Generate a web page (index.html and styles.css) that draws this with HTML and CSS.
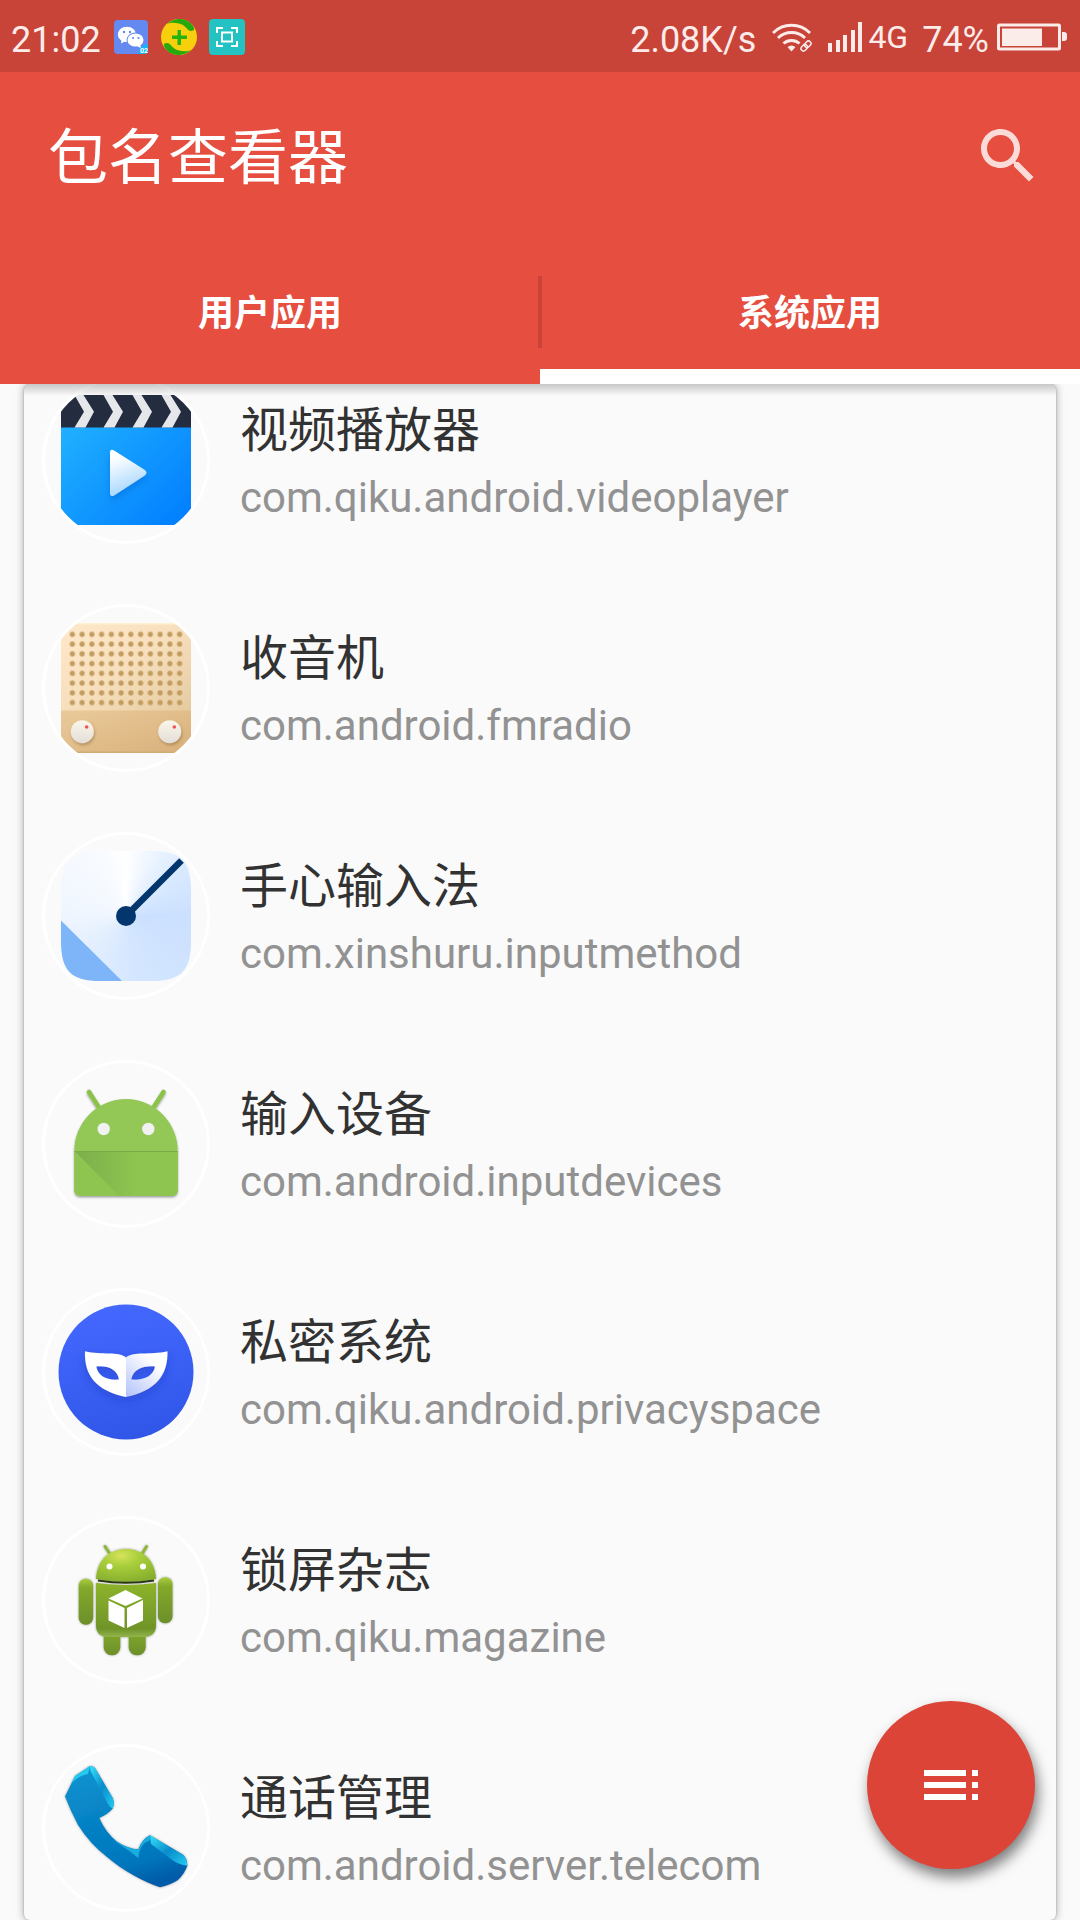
FILE: index.html
```html
<!DOCTYPE html>
<html lang="zh-CN">
<head>
<meta charset="utf-8">
<meta name="viewport" content="width=device-width, initial-scale=1">
<title>包名查看器</title>
<link rel="stylesheet" href="styles.css">
</head>
<body>
<div class="status-bar">
  <div class="status-group">
    <span class="status-text">21:02</span>
    <svg class="status-icon" viewBox="0 0 36 36" aria-hidden="true">
      <rect x="1" y="1" width="34" height="34" rx="4" fill="#6489f1"/>
      <path d="M14 8C8.500 8 5 11.500 5 15.500c0 2.500 1.300 4.600 3.400 6L8 24.500l3.300-1.800c1 .3 2 .4 3 .4" fill="#fff"/>
      <ellipse cx="14" cy="15.300" rx="9" ry="7.500" fill="#fff"/>
      <ellipse cx="22.500" cy="21" rx="9" ry="7.600" fill="#6489f1"/>
      <ellipse cx="22.500" cy="21" rx="8" ry="6.600" fill="#fff"/>
      <path d="M24 27l4 2.300-.6-3.300z" fill="#fff"/>
      <g fill="#6489f1"><circle cx="11" cy="13" r="1.200"/><circle cx="17" cy="13" r="1.200"/><circle cx="20" cy="19" r="1.100"/><circle cx="25.500" cy="19" r="1.100"/></g>
      <path d="M25 35a11 11 0 0 1 10-10v6a4 4 0 0 1-4 4z" fill="#13b5f5"/>
      <text x="27" y="34" class="badge-text">02</text>
    </svg>
    <svg class="status-icon" viewBox="0 0 36 36" aria-hidden="true">
      <circle cx="18" cy="18" r="18" fill="#f8cf0c"/>
      <path d="M6 5C13-2 26-2 32 7q3 5-2 5c-4 0-5-6-12-7.500C13 3.300 9 3.500 6 5z" fill="#27a80d"/>
      <path d="M30 31C23 38 10 38 4 29q-3-5 2-5c4 0 5 6 12 7.500 5 1.200 9 1 12-.5z" fill="#27a80d"/>
      <path d="M16.500 11h3.500v5.500h6V20h-6v6h-3.500v-6H11v-3.500h5.500z" fill="#27b30d"/>
    </svg>
    <svg class="status-icon" viewBox="0 0 36 36" aria-hidden="true">
      <rect width="36" height="36" rx="4" fill="#22c3c2"/>
      <path d="M8 14V9h6M22 9h6v5M28 22v5h-6M14 27H8v-5" fill="none" stroke="#fff" stroke-width="2"/>
      <rect x="13" y="13.500" width="10" height="9" fill="none" stroke="#fff" stroke-width="2"/>
    </svg>
  </div>
  <div class="status-group status-right">
    <span class="status-text">2.08K/s</span>
    <svg class="wifi" viewBox="0 0 40 32" aria-hidden="true">
      <g fill="none" stroke="#fbecea" stroke-width="3">
        <path d="M1 12a26 26 0 0 1 37 0"/>
        <path d="M6 17a19.500 19.500 0 0 1 27 0"/>
        <path d="M11.500 22.500a12 12 0 0 1 16 0"/>
      </g>
      <path d="M15.500 26q4-3 8 0l-4 4.500z" fill="#fbecea"/>
      <g fill="none" stroke="#fbecea" stroke-width="1.500" transform="rotate(-45 34 25)">
        <rect x="28" y="22.500" width="7" height="5" rx="2.500"/><rect x="33" y="22.500" width="7" height="5" rx="2.500"/>
      </g>
    </svg>
    <svg class="signal" viewBox="0 0 34 32" aria-hidden="true">
      <path d="M0 22h4v9H0zM8 19h4v12H8zM15 14h4v17h-4zM23 9h4v22h-4zM30 1h4v30h-4z" fill="#fbecea"/>
    </svg>
    <span class="network">4G</span>
    <span class="status-text">74%</span>
    <svg class="battery" viewBox="0 0 70 28" aria-hidden="true">
      <rect x="1.500" y="2" width="61" height="24" rx="1" fill="none" stroke="#fbecea" stroke-width="3"/>
      <rect x="5" y="5.500" width="40" height="17.500" fill="#fbecea"/>
      <path d="M65 9h2q3 0 3 3v3q0 3-3 3h-2z" fill="#fbecea"/>
    </svg>
  </div>
</div>

<header class="app-header">
  <div class="toolbar">
    <h1 class="title">包名查看器</h1>
    <button class="icon-button" type="button" aria-label="搜索">
      <svg viewBox="0 0 24 24" aria-hidden="true"><path d="M15.500 14h-.79l-.28-.27C15.410 12.590 16 11.110 16 9.500 16 5.910 13.090 3 9.500 3S3 5.910 3 9.500 5.910 16 9.500 16c1.610 0 3.090-.59 4.230-1.570l.27.28v.79l5 4.990L20.490 19l-4.990-5zm-6 0C7.010 14 5 11.990 5 9.500S7.010 5 9.500 5 14 7.010 14 9.500 11.990 14 9.500 14z"/></svg>
    </button>
  </div>
  <nav class="tabs">
    <button class="tab" type="button">用户应用</button>
    <span class="tab-divider"></span>
    <button class="tab tab-active" type="button">系统应用</button>
  </nav>
</header>

<main class="content">
  <div class="card">
    <ul class="app-list">
      <li class="app-row">
        <svg class="avatar" viewBox="0 0 168 168" aria-hidden="true">
          <defs>
            <clipPath id="round"><circle cx="84" cy="84" r="82"/></clipPath>
            <linearGradient id="videoBlue" x1="0" y1="0" x2="1" y2="1"><stop offset="0" stop-color="#25b8ff"/><stop offset="1" stop-color="#007cff"/></linearGradient>
            <linearGradient id="playWhite" x1="0" y1="0" x2=".3" y2="1"><stop offset=".2" stop-color="#fff"/><stop offset="1" stop-color="#a5d6ff"/></linearGradient>
            <filter id="soft" x="-30%" y="-30%" width="160%" height="160%"><feDropShadow dx="0" dy="4" stdDeviation="3" flood-color="#0458c0" flood-opacity=".4"/></filter>
          </defs>
          <g clip-path="url(#round)">
            <rect x="19" y="19" width="130" height="130" fill="url(#videoBlue)"/>
            <rect x="19" y="19" width="130" height="32.500" fill="#232d3f"/>
            <g fill="#e6e7ea">
              <path id="chevron" d="M32.500 19h9l10.500 16.700-8.500 15.800h-11L42 35.700z"/>
              <use href="#chevron" x="29"/><use href="#chevron" x="58"/><use href="#chevron" x="87"/>
            </g>
          </g>
          <path d="M68 77q0-5 4.500-2.300l30 19q4 3 0 6l-30 19.500q-4.500 2.500-4.500-2.200z" fill="url(#playWhite)" filter="url(#soft)"/>
          <circle class="ring" cx="84" cy="84" r="82.500"/>
        </svg>
        <div class="app-text"><h2 class="app-name">视频播放器</h2><p class="app-package">com.qiku.android.videoplayer</p></div>
      </li>
      <li class="app-row">
        <svg class="avatar" viewBox="0 0 168 168" aria-hidden="true">
          <defs>
            <linearGradient id="wood" x1="0" y1="0" x2="1" y2="1"><stop offset="0" stop-color="#ffe8ca"/><stop offset=".5" stop-color="#f7dfbd"/><stop offset="1" stop-color="#e6cba0"/></linearGradient>
            <linearGradient id="woodDark" x1="0" y1="0" x2="1" y2="1"><stop offset="0" stop-color="#eaca9a"/><stop offset="1" stop-color="#d8b07b"/></linearGradient>
            <linearGradient id="knob" x1="0" y1="0" x2="0" y2="1"><stop offset="0" stop-color="#fbf6ea"/><stop offset="1" stop-color="#e3dfd8"/></linearGradient>
            <pattern id="dots" x="25.500" y="25.500" width="9.750" height="9.750" patternUnits="userSpaceOnUse"><circle cx="4.870" cy="4.870" r="2.600" fill="#c29d5f"/></pattern>
            <filter id="knobShadow" x="-30%" y="-30%" width="160%" height="170%"><feDropShadow dx="1" dy="2" stdDeviation="1.500" flood-color="#8a6530" flood-opacity=".5"/></filter>
          </defs>
          <g clip-path="url(#round)">
            <rect x="19" y="19" width="130" height="88" fill="url(#wood)"/>
            <rect x="19" y="19" width="130" height="1.500" fill="#fff2cf"/>
            <rect x="25.500" y="25.500" width="117" height="78" fill="url(#dots)"/>
            <rect x="19" y="106.500" width="130" height="42.500" fill="url(#woodDark)"/>
            <rect x="19" y="147.500" width="130" height="1.500" fill="#cfac72"/>
          </g>
          <g filter="url(#knobShadow)"><circle cx="40.300" cy="127.700" r="11.500" fill="url(#knob)"/><circle cx="127.700" cy="127.700" r="11.500" fill="url(#knob)"/></g>
          <circle cx="44.700" cy="123" r="1.800" fill="#ef5350"/><circle cx="132.300" cy="123" r="1.800" fill="#ef5350"/>
          <circle class="ring" cx="84" cy="84" r="82.500"/>
        </svg>
        <div class="app-text"><h2 class="app-name">收音机</h2><p class="app-package">com.android.fmradio</p></div>
      </li>
      <li class="app-row">
        <svg class="avatar" viewBox="0 0 168 168" aria-hidden="true">
          <defs><clipPath id="squircle"><path d="M19 59C19 29 29 19 59 19h50c30 0 40 10 40 40v50c0 30-10 40-40 40H59c-30 0-40-10-40-40z"/></clipPath></defs>
          <g clip-path="url(#squircle)">
            <foreignObject x="19" y="19" width="130" height="130"><div class="dial"></div></foreignObject>
            <path d="M19 88.500L80 149H19z" fill="#7db5f8"/>
          </g>
          <path d="M84 84L139.500 28.500" stroke="#03366c" stroke-width="6.500"/>
          <circle cx="84" cy="84" r="10" fill="#03366c"/>
          <circle class="ring" cx="84" cy="84" r="82.500"/>
        </svg>
        <div class="app-text"><h2 class="app-name">手心输入法</h2><p class="app-package">com.xinshuru.inputmethod</p></div>
      </li>
      <li class="app-row">
        <svg class="avatar" viewBox="0 0 168 168" aria-hidden="true">
          <defs>
            <filter id="robotShadow" x="-10%" y="-10%" width="120%" height="125%"><feDropShadow dx="0" dy="1.500" stdDeviation="1.200" flood-color="#000" flood-opacity=".4"/></filter>
            <linearGradient id="fold" x1="0" y1="0" x2="1" y2="0"><stop offset="0" stop-color="#7cae4c"/><stop offset=".6" stop-color="#8dc550"/></linearGradient>
          </defs>
          <g filter="url(#robotShadow)">
            <path d="M47 32l11 17M121.500 32l-11 17" stroke="#8bc34a" stroke-width="4.600" stroke-linecap="round"/>
            <path d="M32.300 91a51.700 52 0 0 1 103.400 0v39q0 5.700-5.700 5.700H38q-5.700 0-5.700-5.700z" fill="#93c756"/>
          </g>
          <path d="M32.300 91h103.400v39q0 5.700-5.700 5.700H38q-5.700 0-5.700-5.700z" fill="#8dc550"/>
          <path d="M33 91.500h102.700V130q0 5.700-5.700 5.700H77z" fill="url(#fold)"/>
          <path d="M32.300 91.500h103.400" stroke="#7cab46"/>
          <circle cx="61.700" cy="69" r="6.200" fill="#f1f1f1"/><circle cx="106.300" cy="69" r="6.200" fill="#f1f1f1"/>
          <circle class="ring" cx="84" cy="84" r="82.500"/>
        </svg>
        <div class="app-text"><h2 class="app-name">输入设备</h2><p class="app-package">com.android.inputdevices</p></div>
      </li>
      <li class="app-row">
        <svg class="avatar" viewBox="0 0 168 168" aria-hidden="true">
          <defs>
            <linearGradient id="indigo" x1=".4" y1="0" x2=".6" y2="1"><stop offset="0" stop-color="#4468ff"/><stop offset="1" stop-color="#3056e8"/></linearGradient>
            <linearGradient id="maskShade" x1=".8" y1="0" x2="0" y2="1"><stop offset=".2" stop-color="#fff"/><stop offset="1" stop-color="#b2c2fb"/></linearGradient>
            <filter id="maskShadow" x="-20%" y="-20%" width="140%" height="160%"><feDropShadow dx="0" dy="4" stdDeviation="4" flood-color="#1a3bb8" flood-opacity=".4"/></filter>
          </defs>
          <circle cx="84" cy="84" r="67.500" fill="url(#indigo)"/>
          <g filter="url(#maskShadow)">
            <path fill-rule="evenodd" d="M84 69.500C76 63 60 67.500 43 63.300 42 87 54 103 84 109zM54.300 78.500c12-1 21 3 22.700 13-12 1-21-3-22.700-13z" fill="#fff"/>
            <path fill-rule="evenodd" d="M84 69.500c8-6.500 24-2 41.500-6.200C126 87 114 103 84 109zM113 78.500c-12-1-22 3-23.700 13 12 1 22-3 23.700-13z" fill="url(#maskShade)"/>
          </g>
          <circle class="ring" cx="84" cy="84" r="82.500"/>
        </svg>
        <div class="app-text"><h2 class="app-name">私密系统</h2><p class="app-package">com.qiku.android.privacyspace</p></div>
      </li>
      <li class="app-row">
        <svg class="avatar" viewBox="0 0 168 168" aria-hidden="true">
          <defs>
            <radialGradient id="headGreen" cx=".42" cy=".2" r=".9"><stop offset="0" stop-color="#d6e35c"/><stop offset=".35" stop-color="#a8ce3b"/><stop offset="1" stop-color="#83ab2c"/></radialGradient>
            <linearGradient id="bodyGreen" x1="0" y1="0" x2="0" y2="1"><stop offset="0" stop-color="#8db42c"/><stop offset=".85" stop-color="#6f9428"/><stop offset="1" stop-color="#93b54c"/></linearGradient>
            <linearGradient id="limbGreen" x1="0" y1="0" x2="0" y2="1"><stop offset="0" stop-color="#a9cc3d"/><stop offset=".2" stop-color="#83a92b"/><stop offset="1" stop-color="#6c8f29"/></linearGradient>
            <filter id="thinShadow"><feDropShadow dx="0" dy="0" stdDeviation="1" flood-color="#333" flood-opacity=".5"/></filter>
          </defs>
          <g filter="url(#thinShadow)">
            <path d="M63 30.500l5 7.500M104.500 30.500L100 38" stroke="#8fb63a" stroke-width="3" stroke-linecap="round"/>
            <rect x="61.700" y="108" width="16.600" height="31.300" rx="8" fill="url(#limbGreen)"/>
            <rect x="86.700" y="108" width="17" height="31.300" rx="8" fill="url(#limbGreen)"/>
            <rect x="36.700" y="62.700" width="14.500" height="46" rx="7" fill="url(#limbGreen)"/>
            <rect x="116" y="61.300" width="14.500" height="46" rx="7" fill="url(#limbGreen)"/>
            <path d="M54 67q30 4 60 0v42q0 12-12 12H66q-12 0-12-12z" fill="url(#bodyGreen)"/>
            <path d="M54 63c1-20 14-30 30-30s29 10 30 30q-30 6-60 0z" fill="url(#headGreen)"/>
          </g>
          <path d="M56 64.500q28 4.500 56 0" stroke="#293710" stroke-width="2" fill="none"/>
          <circle cx="67.500" cy="50.500" r="3" fill="#fff"/><circle cx="101" cy="50.500" r="3" fill="#fff"/>
          <path d="M66.500 82.500l17-8.500 17 8.500-17 7.500zM66.500 84.500l16 7.500v20l-16-7.500zM101 84l-16 8v20l16-7.500z" fill="#fff"/>
          <circle class="ring" cx="84" cy="84" r="82.500"/>
        </svg>
        <div class="app-text"><h2 class="app-name">锁屏杂志</h2><p class="app-package">com.qiku.magazine</p></div>
      </li>
      <li class="app-row">
        <svg class="avatar" viewBox="0 0 168 168" aria-hidden="true">
          <defs>
            <linearGradient id="phoneBlue" x1=".3" y1="0" x2=".6" y2="1"><stop offset="0" stop-color="#0b92cf"/><stop offset=".45" stop-color="#0580c3"/><stop offset=".8" stop-color="#0577bd"/><stop offset="1" stop-color="#045ba8"/></linearGradient>
            <linearGradient id="phoneLight" x1="0" y1="0" x2="1" y2="1"><stop offset="0" stop-color="#35e3fb"/><stop offset=".5" stop-color="#0a8ccb"/><stop offset="1" stop-color="#22cdf2"/></linearGradient>
          </defs>
          <path filter="url(#thinShadow)" d="M48 22L33 32 23 52.500Q29 68 36 81 48 100 65 113q13 11 26 18 14 8 27 12.300 10-2 18-7.300 7-7 9.300-14.300 0-7-4.300-11L108 91.300q-8 4-11.700 14.200-11-1-21.600-8-11-9-17.400-23.500 9-4 13.400-9.500 2-5 0-10.500L53 24q-2-2-5-2z" fill="url(#phoneBlue)"/>
          <path d="M48 22q3 0 5 2l17.700 30q2 5 0 10.500-3-1-5-5L48.500 27z" fill="url(#phoneLight)"/>
          <path d="M48 22L33 32l-4 8q8-9 17-10z" fill="#25c9ec"/>
          <path d="M108 91.300l33 19.400q4.300 4 4.300 11-8-1-14-5L109 100z" fill="url(#phoneLight)"/>
          <path d="M108 91.300q-8 4-11.700 14.200-11-1-21.600-8-11-9-17.400-23.500 9 20 24 29 8 5 15 11 1-14 12-18z" fill="#19acdf"/>
          <circle class="ring" cx="84" cy="84" r="82.500"/>
        </svg>
        <div class="app-text"><h2 class="app-name">通话管理</h2><p class="app-package">com.android.server.telecom</p></div>
      </li>
    </ul>
  </div>
</main>

<button class="fab" type="button" aria-label="菜单">
  <svg viewBox="0 0 24 24" aria-hidden="true"><path d="M3 9h14V7H3v2zm0 4h14v-2H3v2zm0 4h14v-2H3v2zm16 0h2v-2h-2v2zm0-10v2h2V7h-2zm0 6h2v-2h-2v2z"/></svg>
</button>
</body>
</html>
```
FILE: styles.css
```css
* {
  box-sizing: border-box;
}

body {
  margin: 0;
  height: 100vh;
  display: flex;
  flex-direction: column;
  overflow: hidden;
  background: #fafafa;
  font-family: Roboto, "Noto Sans CJK SC", sans-serif;
}

h1, h2, p, ul {
  margin: 0;
  padding: 0;
  font-weight: 400;
}

button {
  border: 0;
  padding: 0;
  margin: 0;
  background: none;
  font: inherit;
  color: inherit;
}

.status-bar {
  flex: none;
  height: 72px;
  padding: 2px 13px 0 11px;
  display: flex;
  justify-content: space-between;
  align-items: center;
  background: #c84338;
  color: #fbecea;
}

.status-group {
  display: flex;
  align-items: center;
  gap: 12px;
}

.status-right {
  gap: 16px;
}

.status-text {
  font-size: 36px;
  line-height: 42px;
  padding-top: 6px;
}

.status-icon {
  width: 36px;
  height: 36px;
}

.badge-text {
  font: 700 7px Roboto, sans-serif;
  fill: #fff;
}

.wifi {
  width: 40px;
  height: 32px;
}

.signal {
  width: 34px;
  height: 32px;
}

.network {
  margin: 0 -2px 0 -10px;
  font-size: 32px;
  line-height: 38px;
}

.battery {
  width: 70px;
  height: 28px;
  margin-left: -8px;
}

.app-header {
  flex: none;
  position: relative;
  z-index: 1;
  background: #e64e40;
  color: #fff;
}

.toolbar {
  height: 168px;
  padding: 0 36px 0 48px;
  display: flex;
  align-items: center;
  justify-content: space-between;
}

.title {
  font: 60px/84px "Noto Sans CJK SC", sans-serif;
  padding-bottom: 6px;
}

.icon-button {
  width: 72px;
  height: 72px;
}

.icon-button svg {
  display: block;
  fill: #fadbd8;
}

.tabs {
  height: 144px;
  display: flex;
  align-items: center;
}

.tab {
  flex: 1;
  height: 144px;
  padding-bottom: 4px;
  border-top: 15px solid transparent;
  border-bottom: 15px solid transparent;
  font: 700 36px/54px "Noto Sans CJK SC", sans-serif;
}

.tab-active {
  border-bottom-color: #fff;
}

.tab-divider {
  width: 4px;
  height: 72px;
  margin: 0 -2px;
  background: #c84338;
}

.content {
  flex: 1;
  min-height: 0;
  padding: 0 24px;
  display: flex;
}

.card {
  flex: 1;
  position: relative;
  overflow: hidden;
  border-radius: 6px;
  background: #fafafa;
  box-shadow: 0 0 9px rgba(0, 0, 0, 0.35), 0 0 2px rgba(0, 0, 0, 0.25);
}

/* Shade under the header while the list is scrolled */
.card::before {
  content: "";
  position: absolute;
  inset: 0 0 auto;
  height: 12px;
  background: linear-gradient(rgba(0, 0, 0, 0.2), rgba(0, 0, 0, 0));
}

/* List scrolled part of a row up */
.app-list {
  list-style: none;
  margin-top: -38px;
}

.app-row {
  height: 228px;
  padding: 0 18px;
  display: flex;
  align-items: center;
  gap: 30px;
}

.avatar {
  flex: none;
  width: 168px;
  height: 168px;
}

.ring {
  fill: none;
  stroke: #fff;
  stroke-width: 3px;
}

.dial {
  height: 130px;
  background: conic-gradient(#fff, #d9eaff 50deg, #cbe0ff 90deg, #d4e6ff 170deg, #e3effe 230deg, #f1f7ff 280deg, #f8fbff 340deg, #fff);
}

.app-text {
  padding-top: 4px;
}

.app-name {
  margin-bottom: 2px;
  font: 48px/70px "Noto Sans CJK SC", sans-serif;
  color: #323232;
}

.app-package {
  font-size: 42px;
  line-height: 70px;
  color: #929292;
}

.fab {
  position: fixed;
  right: 45px;
  bottom: 51px;
  width: 168px;
  height: 168px;
  border-radius: 50%;
  display: flex;
  align-items: center;
  justify-content: center;
  background: #db4437;
  box-shadow: 3px 8px 14px rgba(0, 0, 0, 0.5);
}

.fab svg {
  width: 72px;
  height: 72px;
  fill: #fff;
}
```
